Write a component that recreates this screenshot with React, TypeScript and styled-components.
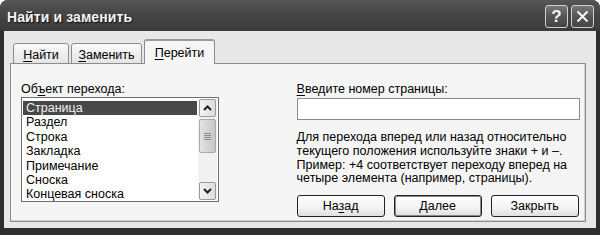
import React from "react";
import styled, { createGlobalStyle } from "styled-components";

const Global = createGlobalStyle`
  html, body { margin: 0; padding: 0; background: #ffffff; }
  body { font-family: "Liberation Sans", Arial, sans-serif; }
`;

const Window = styled.div`
  width: 600px;
  height: 235px;
  background: #2e2e2e;
  border-radius: 8px 8px 0 0;
  display: flex;
  flex-direction: column;
  overflow: hidden;
  box-sizing: border-box;
`;

const TitleBar = styled.div`
  height: 31px;
  flex: none;
  display: flex;
  align-items: center;
  justify-content: space-between;
  padding: 0 6px 0 7px;
  background: linear-gradient(#555, #474747 40%, #3a3a3a);
`;

const Title = styled.div`
  color: #f4f4f4;
  font-weight: bold;
  font-size: 14px;
  letter-spacing: 0.1px;
  text-shadow: 1px 1px 1px #111;
  margin-top: 2px;
`;

const Caps = styled.div`
  display: flex;
  gap: 3px;
  margin-top: 2px;
`;

const CapButton = styled.div`
  width: 21px;
  height: 21px;
  border: 1px solid #d0d0d0;
  border-radius: 3px;
  background: linear-gradient(#777, #555 50%, #444);
  display: flex;
  align-items: center;
  justify-content: center;
  color: #f6f6f6;
  font-weight: bold;
  font-size: 17px;
`;

const Body = styled.div`
  flex: 1;
  margin: 0 4px 7px 4px;
  background: #e8e8e8;
  padding: 9px 10px 6px 6px;
  display: flex;
  flex-direction: column;
`;

const TabRow = styled.div`
  display: flex;
  align-items: flex-end;
  padding-left: 3px;
  height: 24px;
  position: relative;
  z-index: 1;
  margin-bottom: -1px;
`;

const Tab = styled.div<{ $active?: boolean; $w: number }>`
  width: ${(p) => p.$w}px;
  box-sizing: border-box;
  height: ${(p) => (p.$active ? 25 : 21)}px;
  margin-right: ${(p) => (p.$active ? 0 : 2)}px;
  border: 1px solid #8c8c8c;
  border-bottom: ${(p) => (p.$active ? "none" : "1px solid #8c8c8c")};
  border-radius: 3px 3px 0 0;
  background: ${(p) => (p.$active ? "#f5f5f5" : "linear-gradient(#fafafa, #e4e4e4)")};
  border-top: ${(p) => (p.$active ? "2px solid #9a9a9a" : "1px solid #8c8c8c")};
  font-size: 12.5px;
  color: #000;
  display: flex;
  align-items: center;
  justify-content: center;
  padding-top: ${(p) => (p.$active ? 0 : 2)}px;
`;

const U = styled.span`
  text-decoration: underline;
  text-underline-offset: 2px;
`;

const Panel = styled.div`
  flex: 1;
  border: 1px solid #8c8c8c;
  background: #f5f5f5;
  display: flex;
  padding: 18px 5px 0 10px;
  box-shadow: inset -1px -1px 0 #d0d0d0;
`;

const LeftCol = styled.div`
  width: 198px;
  display: flex;
  flex-direction: column;
`;

const RightCol = styled.div`
  margin-left: 78px;
  width: 284px;
  display: flex;
  flex-direction: column;
`;

const Label = styled.div`
  font-size: 12.5px;
  color: #000;
  line-height: 14px;
  height: 14px;
`;

const ListBox = styled.div`
  margin-top: 1px;
  height: 105px;
  box-sizing: border-box;
  border: 1px solid #6e6e6e;
  background: #fff;
  display: flex;
  padding: 3px 1px 1px 1px;
`;

const Items = styled.div`
  flex: 1;
  display: flex;
  flex-direction: column;
`;

const Item = styled.div<{ $sel?: boolean }>`
  height: 14.4px;
  line-height: 15px;
  font-size: 12.5px;
  padding-left: 3px;
  color: ${(p) => (p.$sel ? "#f2f2f2" : "#000")};
  background: ${(p) => (p.$sel ? "#484848" : "transparent")};
  white-space: nowrap;
`;

const ScrollBar = styled.div`
  width: 19px;
  display: flex;
  flex-direction: column;
  background: #f1f1f1;
  margin: -2px 0 0 1px;
`;

const ScrollBtn = styled.div`
  height: 16px;
  margin: 0 1px;
  border: 1px solid #9a9a9a;
  border-radius: 2px;
  background: linear-gradient(90deg, #f4f4f4, #dcdcdc);
  display: flex;
  align-items: center;
  justify-content: center;
`;

const Thumb = styled.div`
  height: 32px;
  margin: 2px 1px 0 1px;
  border: 1px solid #a8a8a8;
  border-radius: 2px;
  background: linear-gradient(90deg, #e2e2e2, #c8c8c8);
  display: flex;
  flex-direction: column;
  align-items: center;
  justify-content: center;
  gap: 1px;
`;

const Grip = styled.div`
  width: 7px;
  height: 1px;
  background: #8a8a8a;
`;

const Track = styled.div`
  flex: 1;
`;

const Input = styled.div`
  margin-top: 2px;
  height: 22px;
  box-sizing: border-box;
  border: 1px solid #8a8a8a;
  background: #fff;
`;

const Help = styled.div`
  margin-top: 11px;
  font-size: 12.5px;
  line-height: 13.8px;
  color: #000;
`;

const ButtonRow = styled.div`
  margin-top: 9px;
  display: flex;
  gap: 9px;
`;

const Button = styled.div<{ $def?: boolean }>`
  width: 88px;
  height: 22px;
  box-sizing: border-box;
  border: 1px solid #222;
  border-radius: 3px;
  background: linear-gradient(#ffffff, #f3f3f3 60%, #dedede);
  box-shadow: ${(p) => (p.$def ? "inset 0 0 0 1px #8a8a8a" : "none")};
  display: flex;
  align-items: center;
  justify-content: center;
  font-size: 12.5px;
  color: #000;
`;

const Chevron = ({ up }: { up?: boolean }) => (
  <svg width="9" height="6" viewBox="0 0 9 6">
    <path
      d={up ? "M1 5 L4.5 1.5 L8 5" : "M1 1 L4.5 4.5 L8 1"}
      fill="none"
      stroke="#222"
      strokeWidth="2"
    />
  </svg>
);

const items = ["Страница", "Раздел", "Строка", "Закладка", "Примечание", "Сноска", "Концевая сноска"];

export default function App() {
  return (
    <>
      <Global />
      <Window>
        <TitleBar>
          <Title>Найти и заменить</Title>
          <Caps>
            <CapButton>?</CapButton>
            <CapButton>
              <svg width="13" height="13" viewBox="0 0 13 13">
                <path d="M1.5 1.5 L11.5 11.5 M11.5 1.5 L1.5 11.5" stroke="#f6f6f6" strokeWidth="2" />
              </svg>
            </CapButton>
          </Caps>
        </TitleBar>
        <Body>
          <TabRow>
            <Tab $w={56}>
              <span><U>Н</U>айти</span>
            </Tab>
            <Tab $w={71}>
              <span><U>З</U>аменить</span>
            </Tab>
            <Tab $w={71} $active>
              <span><U>П</U>ерейти</span>
            </Tab>
          </TabRow>
          <Panel>
            <LeftCol>
              <Label>
                Об<U>ъ</U>ект перехода:
              </Label>
              <ListBox>
                <Items>
                  {items.map((t, i) => (
                    <Item key={t} $sel={i === 0}>
                      {t}
                    </Item>
                  ))}
                </Items>
                <ScrollBar>
                  <ScrollBtn>
                    <Chevron up />
                  </ScrollBtn>
                  <Thumb>
                    <Grip />
                    <Grip />
                    <Grip />
                    <Grip />
                  </Thumb>
                  <Track />
                  <ScrollBtn>
                    <Chevron />
                  </ScrollBtn>
                </ScrollBar>
              </ListBox>
            </LeftCol>
            <RightCol>
              <Label>
                <U>В</U>ведите номер страницы:
              </Label>
              <Input />
              <Help>
                Для перехода вперед или назад относительно
                <br />
                текущего положения используйте знаки + и –.
                <br />
                Пример: +4 соответствует переходу вперед на
                <br />
                четыре элемента (например, страницы).
              </Help>
              <ButtonRow>
                <Button>
                  <span>На<U>з</U>ад</span>
                </Button>
                <Button $def>Далее</Button>
                <Button>Закрыть</Button>
              </ButtonRow>
            </RightCol>
          </Panel>
        </Body>
      </Window>
    </>
  );
}
